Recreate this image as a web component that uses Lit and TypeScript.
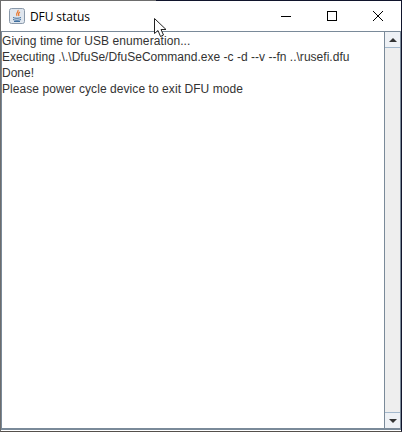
import { LitElement, html, css } from "lit";
import { customElement } from "lit/decorators.js";

@customElement("app-root")
export class AppRoot extends LitElement {
  static styles = css`
    :host { display: block; width: 402px; height: 432px; position: relative; overflow: hidden; background: #fff; font-family: "Liberation Sans", Arial, sans-serif; }
    .window { height: 432px; box-sizing: border-box; display: flex; flex-direction: column; border-top: 1px solid #6d6d6d; border-right: 1px solid #10142c; border-bottom: 1px solid #55504c; border-left: 1px solid #6d6d6d; }
    .topdark { position: absolute; left: 156px; right: 0; top: 0; height: 1px; background: #10142c; }
    .title { height: 30px; flex: none; display: flex; align-items: center; background: #fff; }
    .appicon { margin-left: 8px; width: 16px; height: 16px; flex: none; }
    .name { margin-left: 5px; font: 12px "Open Sans", "Noto Sans", sans-serif; color: #000; flex: 1; letter-spacing: -0.1px; }
    .btn { width: 46px; height: 30px; display: flex; align-items: center; justify-content: center; flex: none; }
    .body { flex: 1; min-height: 0; display: flex; border-top: 1px solid #7a8a99; border-left: 1px solid #7a8a99; border-bottom: 2px solid #7a8a99; margin-bottom: 1px; }
    .text { flex: 1; padding-top: 1px; font-size: 12px; line-height: 16px; color: #333; background: #fff; white-space: nowrap; }
    .l1 { letter-spacing: 0.09px; }
    .l2 { letter-spacing: 0.02px; }
    .l4 { letter-spacing: 0.07px; }
    .bar { width: 15px; flex: none; display: flex; flex-direction: column; background: #eeeeee; border-left: 1px solid #7a8a99; border-right: 1px solid #7a8a99; }
    .arrow { height: 16px; flex: none; display: flex; align-items: center; justify-content: center; background: #eef1f5; box-sizing: border-box; }
    .arrow.up { border-bottom: 1px solid #a3b8cc; }
    .arrow.down { border-top: 1px solid #a3b8cc; }
    .track { flex: 1; background: #eeeeee; }
    .cursor { position: absolute; left: 154px; top: 18px; width: 13px; height: 20px; }
  `;

  render() {
    return html`
      <div class="window">
        <div class="title">
          <svg class="appicon" viewBox="0 0 16 16">
            <rect x="0.5" y="0.5" width="15" height="15" rx="2" fill="#dfe6ee" stroke="#8a99aa"/>
            <path d="M9 2c1 2-3 3-1 6M11 4c-2 1-2 2-1 4" fill="none" stroke="#e8772e" stroke-width="1.2"/>
            <path d="M4 9.500c2 1 6 1 8 0M4 11.500c2 1 6 1 8 0M5 13.500h6" fill="none" stroke="#3f6f9f" stroke-width="1"/>
          </svg>
          <span class="name">DFU status</span>
          <div class="btn"><svg width="12" height="12" viewBox="0 0 12 12"><path d="M1 6.500h10" stroke="#000" fill="none"/></svg></div>
          <div class="btn"><svg width="12" height="12" viewBox="0 0 12 12"><rect x="1.500" y="1.500" width="9" height="9" stroke="#000" fill="none"/></svg></div>
          <div class="btn"><svg width="12" height="12" viewBox="0 0 12 12"><path d="M1 1l10 10M11 1L1 11" stroke="#000" fill="none"/></svg></div>
        </div>
        <div class="body">
          <div class="text">
            <div class="l1">Giving time for USB enumeration...</div>
            <div class="l2">Executing .\\.\\DfuSe/DfuSeCommand.exe -c -d --v --fn ..\\rusefi.dfu</div>
            <div>Done!</div>
            <div class="l4">Please power cycle device to exit DFU mode</div>
          </div>
          <div class="bar">
            <div class="arrow up"><svg width="8" height="4" viewBox="0 0 8 4"><path d="M4 0l4 4H0z" fill="#333"/></svg></div>
            <div class="track"></div>
            <div class="arrow down"><svg width="8" height="4" viewBox="0 0 8 4"><path d="M0 0h8L4 4z" fill="#333"/></svg></div>
          </div>
        </div>
      </div>
      <div class="topdark"></div>
      <svg class="cursor" viewBox="0 0 13 20"><path d="M0.500 0.500v15l3.500-3 2.500 6 3-1.500-2.500-5.500h5z" fill="#fff" stroke="#222"/></svg>
    `;
  }
}
